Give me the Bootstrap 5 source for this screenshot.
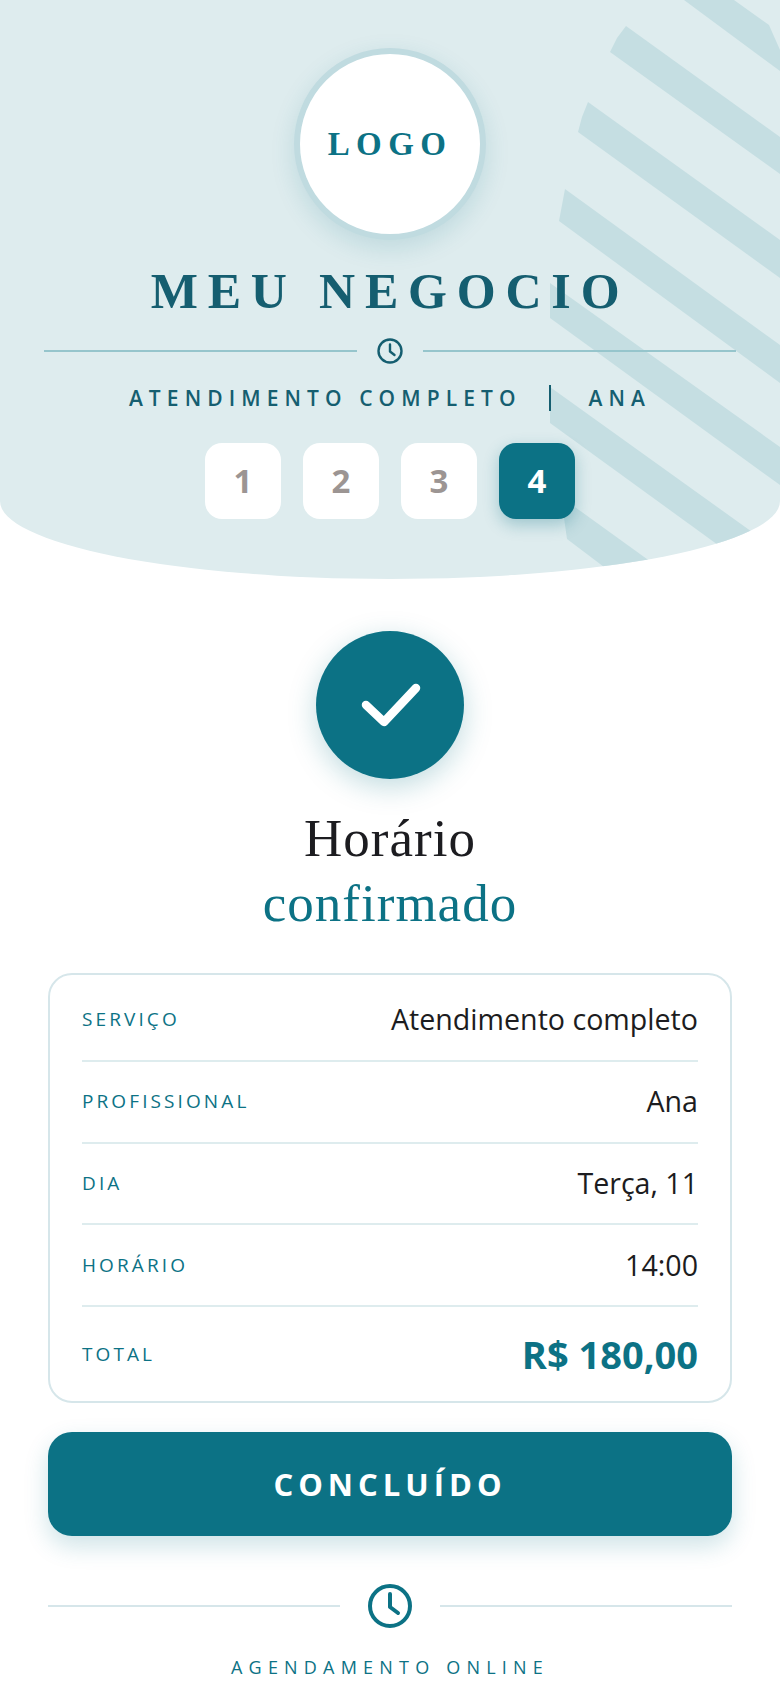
<!DOCTYPE html>
<html lang="pt-BR">
<head>
<meta charset="utf-8">
<title>Meu Negocio</title>
<link href="https://cdn.jsdelivr.net/npm/bootstrap@5.3.0/dist/css/bootstrap.min.css" rel="stylesheet">
<style>
body{background:#fff;font-family:"Open Sans",sans-serif;color:#1c1c20;width:780px;height:1688px;overflow:hidden}
.hero{background:#deecee;height:579px;border-radius:0 0 390px 390px / 0 0 78px 78px;overflow:hidden;padding-top:48px}
.stripes{left:0;top:0;width:780px;height:579px}
.stripes polygon{fill:#c5dee2}
.hero-inner{z-index:1}
.logo-disc{width:192px;height:192px;border:6px solid #c0dbe0;box-shadow:0 8px 24px rgba(12,114,133,.15)}
.logo-word{font:700 33px/1 "Liberation Serif",serif;letter-spacing:6.4px;color:#0c7285}
.biz-name{font:700 50px/1 "Liberation Serif",serif;letter-spacing:9.8px;color:#155e70;margin:26px 0 0}
.hero-rule{margin:21px 44px 0;gap:20px;height:28px}
.rule-line{height:2px;background:#96c5cc;flex:1}
.subline{font-size:21px;font-weight:600;letter-spacing:6.1px;color:#155e70;margin-top:18px;line-height:30px}
.subline-bar{width:2px;height:26px;background:#155e70;margin:0 38px 0 27px}
.steps{gap:22px;margin-top:30px}
.step-tile{width:76px;height:76px;border-radius:17px;background:#fff;color:#9c9593;font-size:33px;font-weight:700}
.step-tile.on{background:#0c7285;color:#fff;box-shadow:0 6px 16px rgba(12,114,133,.3)}
.check-disc{width:148px;height:148px;background:#0c7285;margin-top:52px;box-shadow:0 8px 28px rgba(12,114,133,.25)}
.headline{font:400 53px/65px "Liberation Serif",serif;letter-spacing:1px;color:#1c1c20;margin:27px 0 0}
.headline span{color:#0c7285;display:block}
.sum-card{margin:37px 48px 0;border:2px solid #d6e6ea;border-radius:24px;padding:4px 32px 0;height:430px}
.sum-row{height:82px;border-bottom:2px solid #deecee}
.sum-row:first-child{height:83px}
.sum-row:last-child{border-bottom:0;height:94px}
.sum-label{font-size:19px;letter-spacing:3.1px;color:#0c7285}
.sum-value{font-size:28.6px;color:#1c1c20}
.sum-total{font-size:38px;font-weight:700;color:#0c7285}
.done-btn{display:block;width:684px;height:104px;margin:29px 48px 0;background:#0c7285;color:#fff;border:0;border-radius:24px;font-size:31px;font-weight:700;letter-spacing:5px;box-shadow:0 10px 24px rgba(12,114,133,.2)}
.foot-rule{margin:48px 48px 0;gap:28px}
.foot-line{height:2px;background:#d6e6ea;flex:1}
.foot-text{font-size:18px;letter-spacing:6.2px;color:#0c7285;margin-top:26px}
</style>
</head>
<body>
<header class="hero position-relative text-center">
  <svg class="stripes position-absolute" viewBox="0 0 780 579" aria-hidden="true">
    <polygon points="684,0 734,0 769,25 780,50 780,71"/>
    <polygon points="626,26 780,137 780,174 610,52 617,38"/>
    <polygon points="588,102 780,240 780,278 578,132 582,117"/>
    <polygon points="565,189 780,345 780,383 559,221 562,205"/>
    <polygon points="550,283 780,447 780,485 550,318"/>
    <polygon points="550,387 780,552 780,590 550,423"/>
    <polygon points="561,497 780,655 780,700 567,539"/>
  </svg>
  <div class="hero-inner position-relative d-flex flex-column align-items-center">
    <div class="logo-disc rounded-circle bg-white d-flex align-items-center justify-content-center">
      <span class="logo-word">LOGO</span>
    </div>
    <h1 class="biz-name">MEU NEGOCIO</h1>
    <div class="hero-rule d-flex align-items-center align-self-stretch">
      <span class="rule-line"></span>
      <svg width="26" height="26" viewBox="0 0 26 26" fill="none" stroke="#155e70" stroke-width="2.4" stroke-linecap="round" stroke-linejoin="round"><circle cx="13" cy="13" r="11.5"/><path d="M13 6.5V13.5L17.5 17"/></svg>
      <span class="rule-line"></span>
    </div>
    <div class="subline d-flex align-items-center">
      <span>ATENDIMENTO COMPLETO</span><span class="subline-bar"></span><span>ANA</span>
    </div>
    <div class="steps d-flex">
      <div class="step-tile d-flex align-items-center justify-content-center">1</div>
      <div class="step-tile d-flex align-items-center justify-content-center">2</div>
      <div class="step-tile d-flex align-items-center justify-content-center">3</div>
      <div class="step-tile on d-flex align-items-center justify-content-center">4</div>
    </div>
  </div>
</header>
<main>
  <div class="check-disc rounded-circle mx-auto d-flex align-items-center justify-content-center">
    <svg width="64" height="50" viewBox="0 0 64 50" fill="none" stroke="#fff" stroke-width="8.5" stroke-linecap="round" stroke-linejoin="round"><path d="M8 26L26 43L58 9" transform="translate(0 -1)"/></svg>
  </div>
  <h2 class="headline text-center">Horário<span>confirmado</span></h2>
  <section class="card sum-card">
    <div class="sum-row d-flex justify-content-between align-items-center"><span class="sum-label">SERVIÇO</span><span class="sum-value">Atendimento completo</span></div>
    <div class="sum-row d-flex justify-content-between align-items-center"><span class="sum-label">PROFISSIONAL</span><span class="sum-value">Ana</span></div>
    <div class="sum-row d-flex justify-content-between align-items-center"><span class="sum-label">DIA</span><span class="sum-value">Terça, 11</span></div>
    <div class="sum-row d-flex justify-content-between align-items-center"><span class="sum-label">HORÁRIO</span><span class="sum-value">14:00</span></div>
    <div class="sum-row d-flex justify-content-between align-items-center"><span class="sum-label">TOTAL</span><span class="sum-total">R$ 180,00</span></div>
  </section>
  <button type="button" class="btn done-btn">CONCLUÍDO</button>
  <footer class="text-center">
    <div class="foot-rule d-flex align-items-center">
      <span class="foot-line"></span>
      <svg width="44" height="44" viewBox="0 0 44 44" fill="none" stroke="#0c7285" stroke-width="4" stroke-linecap="round" stroke-linejoin="round"><circle cx="22" cy="22" r="20"/><path d="M22 10V23L30 29"/></svg>
      <span class="foot-line"></span>
    </div>
    <div class="foot-text">AGENDAMENTO ONLINE</div>
  </footer>
</main>
<script src="https://cdn.jsdelivr.net/npm/bootstrap@5.3.0/dist/js/bootstrap.bundle.min.js"></script>
</body>
</html>
